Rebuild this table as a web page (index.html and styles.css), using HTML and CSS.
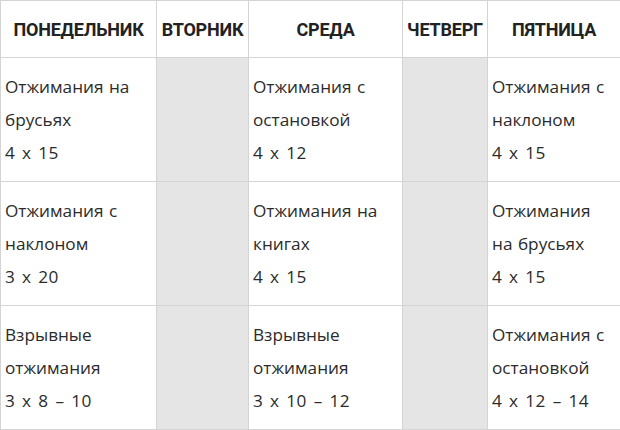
FILE: index.html
```html
<!DOCTYPE html>
<html lang="ru">
<head>
<meta charset="utf-8">
<link rel="stylesheet" href="styles.css">
</head>
<body>
<table class="plan">
  <colgroup>
    <col class="c1"><col class="c2"><col class="c3"><col class="c4"><col class="c5">
  </colgroup>
  <thead>
    <tr>
      <th>Понедельник</th><th>Вторник</th><th>Среда</th><th>Четверг</th><th>Пятница</th>
    </tr>
  </thead>
  <tbody>
    <tr>
      <td>Отжимания на брусьях<br><span class="sets">4 x 15</span></td>
      <td class="rest"></td>
      <td>Отжимания с остановкой<br><span class="sets">4 x 12</span></td>
      <td class="rest"></td>
      <td>Отжимания с наклоном<br><span class="sets">4 x 15</span></td>
    </tr>
    <tr>
      <td>Отжимания с наклоном<br><span class="sets">3 x 20</span></td>
      <td class="rest"></td>
      <td>Отжимания на книгах<br><span class="sets">4 x 15</span></td>
      <td class="rest"></td>
      <td>Отжимания на брусьях<br><span class="sets">4 x 15</span></td>
    </tr>
    <tr>
      <td>Взрывные отжимания<br><span class="sets">3 x 8 – 10</span></td>
      <td class="rest"></td>
      <td>Взрывные отжимания<br><span class="sets">3 x 10 – 12</span></td>
      <td class="rest"></td>
      <td>Отжимания с остановкой<br><span class="sets">4 x 12 – 14</span></td>
    </tr>
  </tbody>
</table>
</body>
</html>
```
FILE: styles.css
```css
html, body {
  margin: 0;
  padding: 0;
  background: #fff;
}
.plan {
  border-collapse: collapse;
  table-layout: fixed;
  width: 620px;
  font-family: "Open Sans", "Noto Sans", sans-serif;
  color: #2b2b2b;
}
.c1 { width: 156px; }
.c2 { width: 92px; }
.c3 { width: 154px; }
.c4 { width: 85px; }
.c5 { width: 133px; }
.plan th, .plan td {
  border: 1px solid #d4d4d4;
}
.plan th {
  height: 56px;
  padding: 0;
  font-family: Roboto, "Open Sans", sans-serif;
  font-size: 18px;
  font-weight: 700;
  text-transform: uppercase;
  text-align: center;
  vertical-align: middle;
  letter-spacing: -0.2px;
  color: #222;
}
.plan td {
  height: 123px;
  padding: 0 6px 0 4px;
  font-size: 17.2px;
  line-height: 33px;
  word-spacing: 1px;
  text-align: left;
  vertical-align: middle;
}
.plan .sets {
  letter-spacing: 0.4px;
  word-spacing: 2px;
}
.plan td.rest {
  background: #e5e5e5;
}
```
